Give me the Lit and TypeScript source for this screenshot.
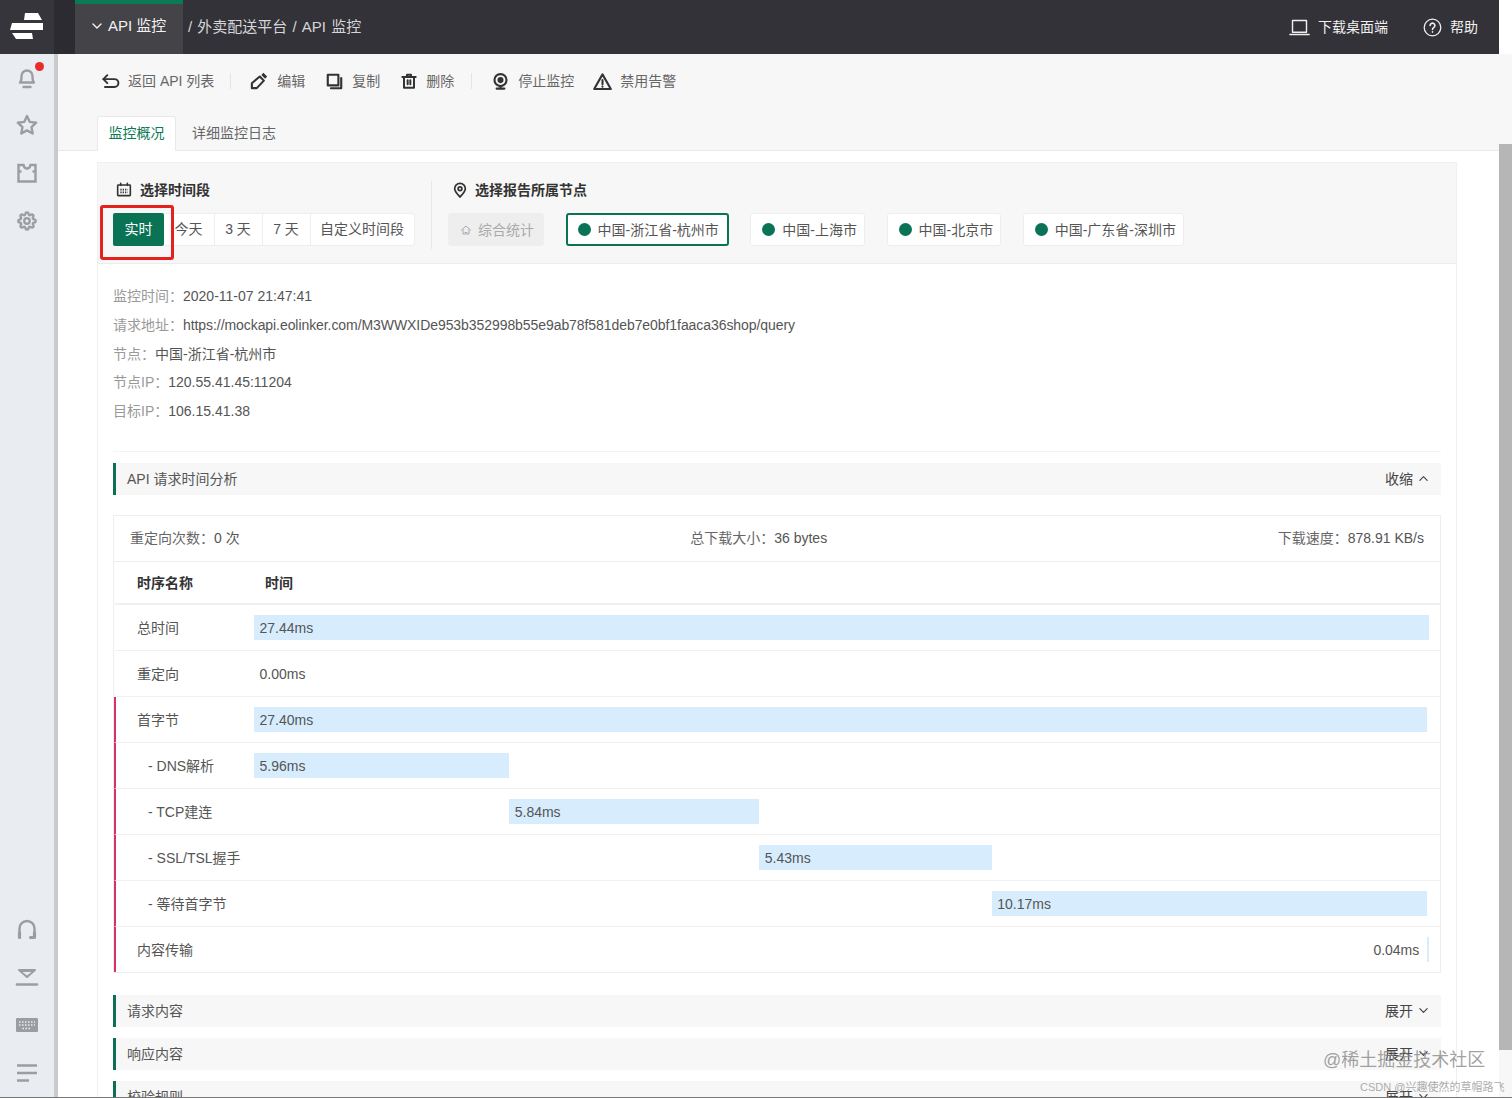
import { LitElement, html, css, svg } from "lit";
import { customElement } from "lit/decorators.js";

const ic = (size: number, body: unknown, sw = 2) =>
  html`<svg width=${size} height=${size} viewBox="0 0 24 24" fill="none" stroke="currentColor" stroke-width=${sw} stroke-linecap="round" stroke-linejoin="round" aria-hidden="true">${body}</svg>`;

const icons = {
  bell: svg`<path d="M5 17.500c1-1 1.500-2.500 1.500-6.500a5.500 5.500 0 0 1 11 0c0 4 .5 5.500 1.500 6.500z"/><path d="M8.500 22h7"/>`,
  star: svg`<path d="M12 3l2.800 5.900 6.400.8-4.700 4.400 1.200 6.400L12 17.400l-5.700 3.100 1.200-6.400-4.700-4.400 6.400-.8z"/>`,
  shirt: svg`<path d="M3.500 4h5c.4 2 1.500 3.500 3.500 3.500s3.100-1.500 3.500-3.500h5v16.500h-17z" stroke-linejoin="miter"/><path d="M3.500 10.500h3M20.500 10.500h-3" stroke-linecap="butt"/>`,
  gear: svg`<g transform="translate(2.500 2.500) scale(.79)" stroke-width="2.900"><circle cx="12" cy="12" r="3.500"/><path d="M19.400 15a1.650 1.650 0 0 0 .33 1.820l.06.06a2 2 0 0 1 0 2.830 2 2 0 0 1-2.830 0l-.06-.06a1.650 1.650 0 0 0-1.820-.33 1.650 1.650 0 0 0-1 1.510V21a2 2 0 0 1-2 2 2 2 0 0 1-2-2v-.09A1.650 1.650 0 0 0 9 19.400a1.650 1.650 0 0 0-1.820.33l-.06.06a2 2 0 0 1-2.830 0 2 2 0 0 1 0-2.830l.06-.06a1.650 1.650 0 0 0 .33-1.820 1.650 1.650 0 0 0-1.510-1H3a2 2 0 0 1-2-2 2 2 0 0 1 2-2h.09A1.650 1.650 0 0 0 4.600 9a1.650 1.650 0 0 0-.33-1.820l-.06-.06a2 2 0 0 1 0-2.830 2 2 0 0 1 2.830 0l.06.06a1.650 1.650 0 0 0 1.820.33H9a1.650 1.650 0 0 0 1-1.510V3a2 2 0 0 1 2-2 2 2 0 0 1 2 2v.09a1.650 1.650 0 0 0 1 1.510 1.650 1.650 0 0 0 1.820-.33l.06-.06a2 2 0 0 1 2.830 0 2 2 0 0 1 0 2.830l-.06.06a1.650 1.650 0 0 0-.33 1.820V9a1.650 1.650 0 0 0 1.510 1H21a2 2 0 0 1 2 2 2 2 0 0 1-2 2h-.09a1.650 1.650 0 0 0-1.510 1z"/></g>`,
  headset: svg`<path d="M4.500 20v-8.500a7.500 7.500 0 0 1 15 0V20"/><path d="M4.500 15.500v5M19.500 15.500v5h-4" stroke-width="3.200"/>`,
  down: svg`<path d="M4 5h16l-8 7z" fill="currentColor"/><path d="M7.500 7h9l-4.500 3.500z" fill="#e9edf2" stroke="none"/><path d="M2 19.500h20" stroke-width="2.600"/>`,
  keyboard: svg`<rect x="1" y="5" width="22" height="14" rx="1" fill="currentColor" stroke="none"/><path d="M4 9h16M4 12h16M7.500 15.500h9" stroke="#e9edf2" stroke-width="1.500" stroke-dasharray="1.500 1.500" stroke-linecap="butt"/>`,
  lines: svg`<path d="M2 4.500h20M2 12h20M2 19.500h12" stroke-linecap="butt"/>`,
  back: svg`<path d="M8 4L3 9l5 5"/><path d="M3 9h14a4.500 4.500 0 0 1 0 10H5"/>`,
  edit: svg`<path d="M13 6l5.500 5.500L9 21.500H2.500V15z"/><path d="M16.500 2.500l5 5" stroke-width="3.800" stroke-linecap="butt"/>`,
  copy: svg`<rect x="2.500" y="2.500" width="15" height="15"/><path d="M21.500 7v14.500H7"/>`,
  trash: svg`<path d="M2 6h20M9 6V2.500h6V6"/><path d="M4.500 6h15v16h-15z"/><path d="M10 11v6M14 11v6"/>`,
  cam: svg`<circle cx="12" cy="10" r="8.500"/><circle cx="12" cy="10" r="2.800" fill="currentColor"/><path d="M6.500 22h11M12 19v3"/>`,
  warn: svg`<path d="M12 3l10.500 18.500h-21z"/><path d="M12 10v5.500M12 18.300v.2"/>`,
  cal: svg`<rect x="2.500" y="4.500" width="19" height="16" rx="1"/><path d="M7 2v3M17 2v3"/><path d="M6.500 11.500h11M6.500 15.500h11" stroke-dasharray="2 1.500" stroke-linecap="butt"/>`,
  pin: svg`<path d="M12 22.500c-4.500-5-8-8.500-8-12.500a8 8 0 0 1 16 0c0 4-3.500 7.500-8 12.500z"/><circle cx="12" cy="10" r="2.800"/>`,
  home: svg`<path d="M3 12l9-8 9 8"/><path d="M6 11v9h12v-9"/><path d="M10 17h4"/>`,
  chevD: svg`<path d="M4 8l8 8 8-8"/>`,
  chevU: svg`<path d="M4 16l8-8 8 8"/>`,
  laptop: svg`<path d="M4 4h16v13.500H4z"/><path d="M1 20h22"/>`,
  help: svg`<circle cx="12" cy="12" r="10.500"/><path d="M9 9.500a3 3 0 1 1 4.500 2.600c-1 .6-1.500 1.200-1.500 2.400M12 17.500v.3" stroke-width="2"/>`,
};

const TOTAL = 27.44;
type Row = { name: string; value: string; ms: number; at: number; sub?: boolean; pink?: boolean; tail?: boolean };
const rows: Row[] = [
  { name: "总时间", value: "27.44ms", ms: 27.44, at: 0 },
  { name: "重定向", value: "0.00ms", ms: 0, at: 0 },
  { name: "首字节", value: "27.40ms", ms: 27.4, at: 0, pink: true },
  { name: "- DNS解析", value: "5.96ms", ms: 5.96, at: 0, sub: true, pink: true },
  { name: "- TCP建连", value: "5.84ms", ms: 5.84, at: 5.96, sub: true, pink: true },
  { name: "- SSL/TSL握手", value: "5.43ms", ms: 5.43, at: 11.8, sub: true, pink: true },
  { name: "- 等待首字节", value: "10.17ms", ms: 10.17, at: 17.23, sub: true, pink: true },
  { name: "内容传输", value: "0.04ms", ms: 0.04, at: 27.4, pink: true, tail: true },
];

@customElement("app-root")
export class AppRoot extends LitElement {
  static styles = css`
    :host { display: block; font-family: "Liberation Sans", "Noto Sans CJK SC", sans-serif; font-size: 14px; line-height: 20px; color: #555; }
    * { box-sizing: border-box; }
    svg { display: block; flex: none; }
    .app { position: relative; display: flex; width: 1512px; height: 1098px; overflow: hidden; background: #fff; }
    .left { width: 54px; display: flex; flex-direction: column; background: #e9edf2; flex: none; }
    .logo { height: 54px; background: #36353c; display: flex; align-items: center; justify-content: center; }
    .nav { flex: 1; display: flex; flex-direction: column; justify-content: space-between; align-items: center; padding: 11px 0 13px; color: #9a9ea3; }
    .nav-group { display: flex; flex-direction: column; gap: 24px; }
    .bell { position: relative; }
    .dot { position: absolute; left: 20px; top: -3px; width: 9px; height: 9px; border-radius: 50%; background: #e92b2b; }
    .center { width: 1445px; display: flex; flex-direction: column; flex: none; }
    .top { height: 54px; flex: none; background: #333239; color: #e4e4e6; display: flex; align-items: center; font-size: 15px; }
    .top-gap { width: 21px; height: 54px; background: #2c2b31; }
    .top-tab { width: 108px; height: 54px; background: #444348; border-top: 4px solid #0a7a55; display: flex; align-items: center; gap: 5px; padding: 0 0 6px 16px; color: #f2f2f2; }
    .crumb { margin: -1px 0 0 5px; flex: 1; color: #d6d6d8; word-spacing: 1px; }
    .top-r { display: flex; align-items: center; gap: 8px; font-size: 14px; color: #f0f0f0; }
    .top-r.help { margin-left: 35px; margin-right: 21px; }
    .body { flex: 1; display: flex; min-height: 0; }
    .strip { width: 4px; background: #c9cacb; flex: none; }
    .main { flex: 1; min-width: 0; }
    .head { height: 97px; background: #f7f7f7; border-bottom: 1px solid #e9e9e9; padding: 16px 0 0 39px; }
    .tools { display: flex; align-items: center; height: 22px; padding-left: 4px; color: #333; }
    .tool { display: flex; align-items: center; gap: 9px; }
    .tool span { color: #666; }
    .tool.tight { gap: 8px; }
    .tool.m21 { margin-left: 21px; }
    .tool.m19 { margin-left: 19px; }
    .sep { width: 1px; height: 16px; background: #e4e4e4; margin: 0 19px 0 16px; }
    .sep.b { margin: 0 20px 0 17px; }
    .tabs { display: flex; margin-top: 24px; }
    .tab { height: 35px; line-height: 32px; border: 1px solid #e9e9e9; border-bottom: 0; border-radius: 3px 3px 0 0; background: #fff; color: #0a7a55; width: 79px; text-align: center; white-space: nowrap; }
    .tab.off { background: none; border-color: transparent; color: #666; width: auto; padding: 0 15px; }
    .card { margin: 11px 0 0 39px; width: 1360px; border: 1px solid #f0f0f0; border-bottom: 0; padding-bottom: 40px; }
    .filter { display: flex; background: #f7f7f7; border-bottom: 1px solid #ececec; height: 101px; padding: 17px 0 0 15px; }
    .f-col { display: flex; flex-direction: column; gap: 13px; }
    .f-title { height: 20px; display: flex; align-items: center; font-weight: bold; color: #333; padding-left: 3px; gap: 8px; }
    .f-title.loc { gap: 7px; padding-left: 4px; }
    .times { position: relative; display: flex; height: 33px; background: #fff; border-radius: 3px; border: 1px solid #eeeeee; width: 302px; }
    .t { line-height: 31px; border-left: 1px solid #eee; white-space: nowrap; text-align: center; color: #555; padding: 0 1px 0 0; }
    .t.now { background: #0a7355; color: #fff; border: 0; margin: -1px 0 -1px -1px; line-height: 33px; width: 51px; border-radius: 2px; padding: 0; }
    .t.first { border-left: 0; width: 50px; }
    .t.n { width: 48px; }
    .t.c { flex: 1; }
    .mark { position: absolute; left: -14px; top: -9px; width: 74px; height: 55px; border: 3px solid #e5211d; border-radius: 3px; }
    .vline { width: 1px; height: 68px; background: #e8e8e8; margin: 1px 16px 0; }
    .nodes { display: flex; gap: 21.500px; }
    .node { height: 33px; display: flex; align-items: center; gap: 7px; padding: 0 7px 0 11px; background: #fff; border: 1px solid #eee; border-radius: 3px; white-space: nowrap; }
    .node i { width: 13px; height: 13px; border-radius: 50%; background: #0a7355; }
    .node.on { border: 2px solid #0a7355; padding: 0 8px 0 10px; }
    .node.all { background: #eeeeee; color: #aaa; padding: 0 9px 0 11px; gap: 6px; }
    .info { margin: 0 15px; padding: 18px 0 25px; border-bottom: 1px solid #f3f3f3; line-height: 28.8px; }
    .info b { font-weight: normal; color: #999; }
    .url { letter-spacing: -0.07px; }
    .sec { height: 32px; margin: 11px 15px 0; background: #f7f7f7; border-left: 3px solid #0a6f55; display: flex; align-items: center; justify-content: space-between; padding: 0 12px 0 11px; color: #555; }
    .sec div { display: flex; align-items: center; gap: 5px; color: #444; }
    .box { margin: 20px 15px 22px; border: 1px solid #eee; }
    .sum { height: 46px; display: flex; align-items: center; justify-content: space-between; padding: 0 16px; border-bottom: 1px solid #eee; }
    .sum b { font-weight: normal; color: #666; }
    .row { height: 46px; display: grid; grid-template-columns: 138px 1fr; align-items: center; border-left: 2px solid transparent; border-bottom: 1px solid #f0f0f0; padding-right: 11px; }
    .row:last-child { border-bottom: 0; height: 45px; }
    .row.pink { border-left-color: #d8306b; }
    .row.th { height: 43px; border-bottom: 2px solid #f0f0f0; font-weight: bold; color: #333; padding-top: 2px; }
    .name { padding: 2px 0 0 21px; }
    .name.sub { padding-left: 32px; }
    .track { display: flex; height: 25px; align-items: center; }
    .track.tail { justify-content: flex-end; }
    .tail .val { margin-right: 8px; }
    .bar { height: 25px; background: #d7edfd; display: flex; align-items: center; white-space: nowrap; flex: none; }
    .val { padding: 2px 0 0 5.500px; white-space: nowrap; color: #555; }
    .th .name { padding-top: 0; }
    .th .tm { padding-left: 11px; }
    .scroll { width: 13px; flex: none; background: #f7f7f7; position: relative; }
    .thumb { position: absolute; left: 0; right: 0; top: 144px; height: 906px; background: #b6b6b6; }
    .scroll-top { height: 54px; background: #fff; }
    .wm1 { position: absolute; left: 1323px; top: 1049px; font-size: 18px; line-height: 22px; color: rgba(130,130,130,.75); white-space: nowrap; }
    .wm2 { position: absolute; left: 1360px; top: 1080px; font-size: 11px; line-height: 14px; color: rgba(150,150,150,.8); white-space: nowrap; }
    .edge { position: absolute; left: 0; right: 0; bottom: 0; height: 1px; background: #777; }
  `;

  private barFor(r: Row) {
    const left = (r.at / TOTAL) * 100;
    const width = (r.ms / TOTAL) * 100;
    if (r.tail) {
      return html`<div class="track tail"><span class="val">${r.value}</span><div class="bar" style="width:${width}%"></div></div>`;
    }
    return html`<div class="track"><div class="bar" style="margin-left:${left}%;width:${width}%"><span class="val">${r.value}</span></div></div>`;
  }

  render() {
    return html`<div class="app">
      <aside class="left">
        <div class="logo">
          <svg width="34" height="28" viewBox="0 0 34 28" aria-hidden="true"><path d="M15 0h13l4 7H14zM2 10h31v7H0zM2 20h20l1 6H6z" fill="#fff"/></svg>
        </div>
        <nav class="nav">
          <div class="nav-group">
            <div class="bell">${ic(24, icons.bell, 2.4)}<span class="dot"></span></div>
            ${ic(24, icons.star, 2.4)}${ic(24, icons.shirt, 2.4)}${ic(24, icons.gear, 2.4)}
          </div>
          <div class="nav-group">
            ${ic(24, icons.headset, 2.4)}${ic(24, icons.down, 2)}${ic(24, icons.keyboard)}${ic(24, icons.lines, 2.4)}
          </div>
        </nav>
      </aside>
      <div class="center">
        <header class="top">
          <div class="top-gap"></div>
          <div class="top-tab">${ic(12, icons.chevD, 2.8)}<span>API 监控</span></div>
          <div class="crumb">/ 外卖配送平台 / API 监控</div>
          <div class="top-r">${ic(21, icons.laptop, 1.6)}<span>下载桌面端</span></div>
          <div class="top-r help">${ic(19, icons.help, 1.6)}<span>帮助</span></div>
        </header>
        <div class="body">
          <div class="strip"></div>
          <main class="main">
            <div class="head">
              <div class="tools">
                <div class="tool tight">${ic(19, icons.back, 2.4)}<span>返回 API 列表</span></div>
                <div class="sep"></div>
                <div class="tool">${ic(18, icons.edit, 2.8)}<span>编辑</span></div>
                <div class="tool m21">${ic(17, icons.copy, 3)}<span>复制</span></div>
                <div class="tool m21">${ic(16, icons.trash, 3)}<span>删除</span></div>
                <div class="sep b"></div>
                <div class="tool">${ic(17, icons.cam, 3)}<span>停止监控</span></div>
                <div class="tool tight m19">${ic(19, icons.warn, 2.6)}<span>禁用告警</span></div>
              </div>
              <div class="tabs"><div class="tab">监控概况</div><div class="tab off">详细监控日志</div></div>
            </div>
            <section class="card">
              <div class="filter">
                <div class="f-col">
                  <div class="f-title">${ic(16, icons.cal, 2.4)}<span>选择时间段</span></div>
                  <div class="times">
                    <div class="t now">实时</div><div class="t first">今天</div><div class="t n">3 天</div><div class="t n">7 天</div><div class="t c">自定义时间段</div>
                    <div class="mark"></div>
                  </div>
                </div>
                <div class="vline"></div>
                <div class="f-col">
                  <div class="f-title loc">${ic(16, icons.pin, 2.6)}<span>选择报告所属节点</span></div>
                  <div class="nodes">
                    <div class="node all">${ic(12, icons.home)}<span>综合统计</span></div>
                    <div class="node on"><i></i><span>中国-浙江省-杭州市</span></div>
                    <div class="node"><i></i><span>中国-上海市</span></div>
                    <div class="node"><i></i><span>中国-北京市</span></div>
                    <div class="node"><i></i><span>中国-广东省-深圳市</span></div>
                  </div>
                </div>
              </div>
              <div class="info">
                <div><b>监控时间：</b>2020-11-07 21:47:41</div>
                <div><b>请求地址：</b><span class="url">https://mockapi.eolinker.com/M3WWXIDe953b352998b55e9ab78f581deb7e0bf1faaca36shop/query</span></div>
                <div><b>节点：</b>中国-浙江省-杭州市</div>
                <div><b>节点IP：</b>120.55.41.45:11204</div>
                <div><b>目标IP：</b>106.15.41.38</div>
              </div>
              <div class="sec"><span>API 请求时间分析</span><div>收缩 ${ic(11, icons.chevU, 2.6)}</div></div>
              <div class="box">
                <div class="sum">
                  <span><b>重定向次数：</b>0 次</span>
                  <span><b>总下载大小：</b>36 bytes</span>
                  <span><b>下载速度：</b>878.91 KB/s</span>
                </div>
                <div class="row th"><div class="name">时序名称</div><div class="tm">时间</div></div>
                ${rows.map(
                  (r) => html`<div class="row ${r.pink ? "pink" : ""}">
                    <div class="name ${r.sub ? "sub" : ""}">${r.name}</div>
                    ${this.barFor(r)}
                  </div>`
                )}
              </div>
              <div class="sec"><span>请求内容</span><div>展开 ${ic(11, icons.chevD, 2.6)}</div></div>
              <div class="sec"><span>响应内容</span><div>展开 ${ic(11, icons.chevD, 2.6)}</div></div>
              <div class="sec"><span>校验规则</span><div>展开 ${ic(11, icons.chevD, 2.6)}</div></div>
            </section>
          </main>
        </div>
      </div>
      <div class="scroll"><div class="scroll-top"></div><div class="thumb"></div></div>
      <div class="wm1">@稀土掘金技术社区</div>
      <div class="wm2">CSDN @兴趣使然的草帽路飞</div>
      <div class="edge"></div>
    </div>`;
  }
}
